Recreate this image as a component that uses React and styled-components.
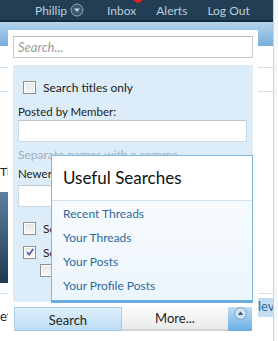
import React from 'react';
import styled, { createGlobalStyle } from 'styled-components';

const GlobalStyle = createGlobalStyle`
  html, body {
    margin: 0;
    padding: 0;
    background: #ffffff;
  }

  body {
    font-family: Lato, "Liberation Sans", sans-serif;
  }
`;

const navLinks = ['Inbox', 'Alerts', 'Log Out'];

const searchLinks = [
  'Recent Threads',
  'Your Threads',
  'Your Posts',
  'Your Profile Posts'
];

const Checkbox = ({ checked }) => (
  <Box>
    {checked && (
      <svg width="10" height="10" viewBox="0 0 10 10">
        <path d="M2 5.2 L4.2 7.6 L8.2 2" fill="none" stroke="#3a57a8" strokeWidth="1.6" />
      </svg>
    )}
  </Box>
);

const App = () => (
  <>
    <GlobalStyle />
    <Page>
      <Main>
        <TopBar>
          <NavItem>
            Phillip
            <svg width="14" height="14" viewBox="0 0 14 14">
              <circle cx="7" cy="7" r="6" fill="#3a5870" stroke="#8ea6b9" strokeWidth="1" />
              <path d="M4 5.5 H10 L7 9 Z" fill="#c7d5e0" />
            </svg>
          </NavItem>
          {navLinks.map((link) => (
            <NavItem key={link}>
              {link}
              {link === 'Inbox' && (
                <Badge width="14" height="4" viewBox="0 0 14 4">
                  <path d="M2 0 H12 L7 3.5 Z" fill="#e02020" />
                </Badge>
              )}
            </NavItem>
          ))}
        </TopBar>
        <Band />

        {/* page behind the search popup, mostly hidden */}
        <Backdrop>
          <Rule $top={21} />
          <Rule $top={23} />
          <ThreadTitle>Th</ThreadTitle>
          <Thumb />
          <Rule $top={10} />
          <FootRow>
            <FootText>et</FootText>
            <Tag>lev</Tag>
          </FootRow>
        </Backdrop>

        <Popup>
          <SearchField placeholder="Search..." />
          <Panel>
            <CheckRow>
              <Checkbox />
              <CheckText>Search titles only</CheckText>
            </CheckRow>
            <FieldLabel>Posted by Member:</FieldLabel>
            <TextField />
            <Hint>Separate names with a comma.</Hint>
            <FieldLabel $top={3} $clip={33}>Newer Than:</FieldLabel>
            <TextField $top={3} />
            <CheckRow $top={15}>
              <Checkbox />
              <CheckText $clip={9}>Search this forum only</CheckText>
            </CheckRow>
            <CheckRow $top={12}>
              <Checkbox checked />
              <CheckText $clip={9}>Search this thread only</CheckText>
            </CheckRow>
            <CheckRow $top={6} $indent={17}>
              <Checkbox />
            </CheckRow>
          </Panel>
          <ButtonRow>
            <SearchButton>Search</SearchButton>
            <MoreButton>More...</MoreButton>
            <Collapse>
              <svg width="13" height="13" viewBox="0 0 13 13">
                <circle cx="6.5" cy="6.5" r="5.8" fill="#cfe4f4" stroke="#7f9fbd" strokeWidth="1" />
                <path d="M3.8 8 H9.2 L6.5 4.6 Z" fill="#3f5a74" />
              </svg>
            </Collapse>
          </ButtonRow>

          <Menu>
            <MenuHeading>Useful Searches</MenuHeading>
            <MenuList>
              {searchLinks.map((link) => (
                <MenuLink key={link}>{link}</MenuLink>
              ))}
            </MenuList>
          </Menu>
        </Popup>
      </Main>
      <Gutter />
    </Page>
  </>
);

const Page = styled.div`
  display: flex;
  width: 278px;
  height: 341px;
  overflow: hidden;
`;

const Main = styled.div`
  position: relative;
  flex: none;
  width: 273px;
  height: 341px;
  overflow: hidden;
`;

const Gutter = styled.div`
  flex: 1;
  border-left: 1px solid #cfd3d6;
  background: #f6f7f8;
`;

const TopBar = styled.div`
  display: flex;
  align-items: stretch;
  gap: 20px;
  height: 20px;
  padding-left: 35px;
  background: #213e55;
  border-bottom: 2px solid #142c3e;
  color: #bccfdd;
  font-size: 12px;
`;

const NavItem = styled.div`
  position: relative;
  display: flex;
  align-items: center;
  gap: 3px;

  &:first-child {
    margin-right: 3px;
  }
`;

const Badge = styled.svg`
  position: absolute;
  top: 0;
  right: -9px;
`;

const Band = styled.div`
  height: 24px;
  background: linear-gradient(to bottom, #b3d4ee, #78afdc);
`;

const Backdrop = styled.div`
  display: flex;
  flex-direction: column;
`;

const Rule = styled.div`
  margin-top: ${(p) => p.$top}px;
  height: 1px;
  background: #d3dfe9;
`;

const ThreadTitle = styled.div`
  margin-top: 72px;
  font-size: 12px;
  line-height: 16px;
  color: #1d1d1d;
`;

const Thumb = styled.div`
  margin-top: 12px;
  width: 120px;
  height: 91px;
  background: linear-gradient(to bottom, #5d80a0, #1f3a52);
`;

const FootRow = styled.div`
  display: flex;
  align-items: flex-start;
  justify-content: space-between;
  margin-top: 4px;
`;

const FootText = styled.div`
  margin-top: 10px;
  font-size: 13px;
  color: #222;
`;

const Tag = styled.div`
  width: 15px;
  height: 19px;
  overflow: hidden;
  padding-left: 1px;
  background: #c3def3;
  color: #2f6a98;
  font-size: 13px;
  line-height: 17px;
`;

const Popup = styled.div`
  position: absolute;
  left: 8px;
  top: 30px;
  width: 240px;
  height: 311px;
  padding: 6px 5px 0;
  background: #ffffff;
`;

const SearchField = styled.input`
  display: block;
  box-sizing: border-box;
  width: 240px;
  height: 22px;
  margin: 0;
  padding: 0 4px;
  border: 1px solid #c9c9c9;
  border-top-color: #b8b8b8;
  outline: none;
  font-family: inherit;
  font-size: 13px;

  &::placeholder {
    color: #9c9c9c;
    font-style: italic;
  }
`;

const Panel = styled.div`
  box-sizing: border-box;
  height: 237px;
  margin-top: 7px;
  padding: 16px 6px 0 5px;
  background: #dcedf9;
`;

const CheckRow = styled.div`
  display: flex;
  align-items: center;
  gap: 7px;
  height: 12px;
  margin-top: ${(p) => p.$top || 0}px;
  padding-left: ${(p) => 5 + (p.$indent || 0)}px;
`;

const Box = styled.span`
  display: flex;
  align-items: center;
  justify-content: center;
  box-sizing: border-box;
  flex: none;
  width: 13px;
  height: 13px;
  border: 1px solid #8d8f91;
  box-shadow: inset 0 0 0 1px #ffffff;
  background: linear-gradient(to bottom, #e6e6e6, #f6f6f6);
`;

// texts that run under the "Useful Searches" menu are cut at its edge
const CheckText = styled.span`
  max-width: ${(p) => (p.$clip ? `${p.$clip}px` : 'none')};
  overflow: hidden;
  font-size: 12px;
  color: #222;
  white-space: nowrap;
`;

const FieldLabel = styled.div`
  max-width: ${(p) => (p.$clip ? `${p.$clip}px` : 'none')};
  overflow: hidden;
  margin-top: ${(p) => p.$top ?? 11}px;
  font-size: 11.5px;
  line-height: 16px;
  color: #222;
  white-space: nowrap;
`;

const TextField = styled.div`
  box-sizing: border-box;
  width: 229px;
  height: 22px;
  margin-top: ${(p) => p.$top || 0}px;
  background: #ffffff;
  border: 1px solid #cfd8df;
  border-top-color: #bfc6cc;
`;

const Hint = styled.div`
  margin-top: 5px;
  font-size: 12px;
  line-height: 16px;
  color: #a3afba;
`;

const ButtonRow = styled.div`
  display: flex;
  height: 24px;
  margin-top: 5px;
  padding-left: 1px;
`;

const SearchButton = styled.div`
  box-sizing: border-box;
  width: 108px;
  display: flex;
  align-items: center;
  justify-content: center;
  padding-top: 2px;
  border: 1px solid #a9cde8;
  background: linear-gradient(to bottom, #deeffb, #bddcf3);
  font-size: 13px;
  color: #1e1e1e;
`;

const MoreButton = styled.div`
  box-sizing: border-box;
  width: 106px;
  display: flex;
  align-items: center;
  justify-content: center;
  border-bottom: 2px solid #cfd2d6;
  background: linear-gradient(to bottom, #fbfbfb, #e9eaec);
  font-size: 13px;
  color: #1e1e1e;
`;

const Collapse = styled.div`
  box-sizing: border-box;
  width: 24px;
  display: flex;
  justify-content: center;
  background: linear-gradient(to bottom, #bcdcf4, #6aaee4);
`;

const Menu = styled.div`
  position: absolute;
  left: 43px;
  top: 125px;
  width: 200px;
  border: 1px solid #7db7e3;
  border-bottom: 3px solid #6aade1;
  background: #ffffff;
`;

const MenuHeading = styled.div`
  height: 44px;
  padding-left: 11px;
  border-bottom: 1px solid #cfe3f3;
  font-size: 17px;
  line-height: 44px;
  color: #111;
`;

const MenuList = styled.div`
  padding: 1px 0 2px;
  background: linear-gradient(to bottom, #f7fbfe, #ecf5fc);
`;

const MenuLink = styled.div`
  padding-left: 11px;
  font-size: 12px;
  line-height: 24px;
  color: #2d6a9b;
`;

export default App;
